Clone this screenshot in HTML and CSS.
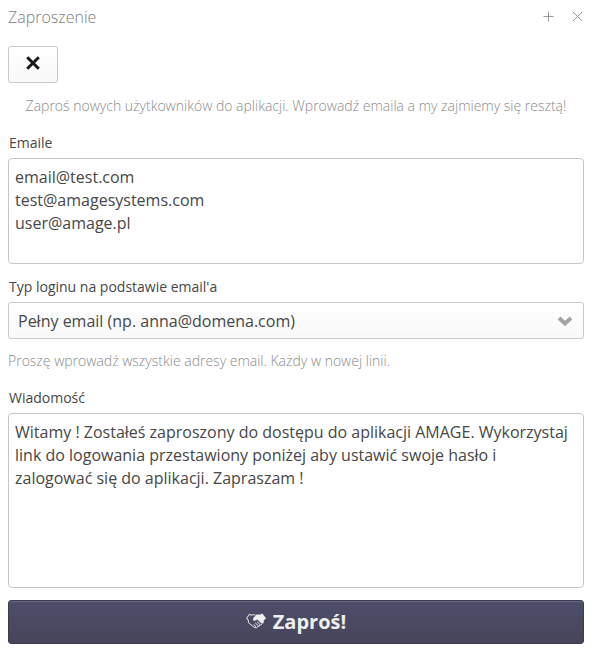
FILE: index.html
```html
<!DOCTYPE html>
<html lang="pl">
<head>
    <meta charset="UTF-8">
    <meta name="viewport" content="width=device-width, initial-scale=1.0">
    <title>Zaproszenie</title>
    <link rel="stylesheet" href="styles.css">
</head>
<body>
    <!-- Window header -->
    <header class="window-header">
        <h1 class="window-title">Zaproszenie</h1>
        <div class="window-controls">
            <button class="window-control" type="button" aria-label="Maksymalizuj">
                <svg width="11" height="11" viewBox="0 0 11 11"><path d="M5.5 0.5v10M0.5 5.5h10"/></svg>
            </button>
            <button class="window-control" type="button" aria-label="Zamknij">
                <svg width="11" height="11" viewBox="0 0 11 11"><path d="M1 1l9 9M10 1l-9 9"/></svg>
            </button>
        </div>
    </header>

    <form class="invite-form">
        <div class="toolbar">
            <button class="button" type="button" aria-label="Anuluj">
                <svg width="16" height="16" viewBox="0 0 16 16"><path d="M2.2 2.2l11.6 11.6M13.8 2.2L2.2 13.8"/></svg>
            </button>
        </div>

        <p class="note note-center">Zaproś nowych użytkowników do aplikacji. Wprowadź emaila a my zajmiemy się resztą!</p>

        <div class="field">
            <label class="field-label" for="emails">Emaile</label>
            <textarea class="text-area" id="emails" rows="4">email@test.com
test@amagesystems.com
user@amage.pl</textarea>
        </div>

        <div class="field">
            <label class="field-label" for="loginType">Typ loginu na podstawie email'a</label>
            <div class="select-wrap">
                <select class="select" id="loginType">
                    <option>Pełny email (np. anna@domena.com)</option>
                </select>
                <svg class="select-arrow" width="16" height="10" viewBox="0 0 16 10"><path d="M2 2l6 5.5L14 2"/></svg>
            </div>
        </div>

        <p class="note">Proszę wprowadź wszystkie adresy email. Każdy w nowej linii.</p>

        <div class="field">
            <label class="field-label" for="message">Wiadomość</label>
            <textarea class="text-area" id="message" rows="7">Witamy ! Zostałeś zaproszony do dostępu do aplikacji AMAGE. Wykorzystaj link do logowania przestawiony poniżej aby ustawić swoje hasło i zalogować się do aplikacji. Zapraszam !</textarea>
        </div>

        <button class="button-primary" type="submit">
            <svg width="20" height="16" viewBox="0 0 20 16">
                <path class="hand-solid" d="M7.6 4.4L10.6 1.6h3.9l1.8-1.1L20 5.2l-2.2 2.2-.2 2.8-1.9.4-4.5-4.1-2.2 1.2c-1.5.6-2.6-1.2-1.4-3.3z"/>
                <path class="hand-line" d="M9.5 2.2L7.6 1.7 5 2.2 3.7 1 .6 5.2l1.8 2.3v2.2l5.8 4.6 2.2.4 5.6-3.8M.8 5.4l1.5 1.8M11 8.6l3.2 3M9.2 9.8l3.2 3M7.6 11.4l2.4 2.2"/>
            </svg>
            <span>Zaproś!</span>
        </button>
    </form>
</body>
</html>
```
FILE: styles.css
```css
* {
    box-sizing: border-box;
}

body {
    margin: 0;
    padding: 0 6px 12px 8px;
    background: #fff;
    color: #474747;
    font-family: "Open Sans", sans-serif;
    font-size: 16px;
    line-height: 23px;
}

.window-header {
    display: flex;
    justify-content: space-between;
    align-items: center;
    height: 34px;
    padding-right: 1px;
}

.window-title {
    margin: 0;
    font-size: 16px;
    font-weight: 300;
    color: #7d7d7d;
}

.window-controls {
    display: flex;
    gap: 18px;
    padding-bottom: 2px;
}

.window-control {
    display: flex;
    padding: 0;
    border: none;
    background: none;
    cursor: pointer;
}

.window-control svg {
    fill: none;
    stroke: #999;
    stroke-width: 1;
}

.invite-form {
    display: flex;
    flex-direction: column;
    padding-top: 12px;
}

.toolbar {
    display: flex;
    margin-bottom: 12px;
}

.button {
    display: flex;
    justify-content: center;
    align-items: center;
    width: 50px;
    height: 37px;
    padding: 0 0 3px;
    border: 1px solid #c9c9c9;
    border-radius: 3px;
    background: linear-gradient(#fff, #f8f8f8);
    cursor: pointer;
}

.button svg {
    fill: none;
    stroke: #191919;
    stroke-width: 3;
}

.note {
    margin: 0 0 15px;
    font-size: 14px;
    font-weight: 300;
    line-height: 21px;
    color: #8c8c8c;
}

.note-center {
    text-align: center;
}

.field {
    display: flex;
    flex-direction: column;
    gap: 4px;
    margin-bottom: 11px;
}

.field:last-of-type {
    margin-bottom: 12px;
}

.field-label {
    padding-left: 1px;
    font-size: 14px;
}

.text-area {
    display: block;
    width: 100%;
    padding: 7px 6px 5px;
    border: 1px solid #c5c5c5;
    border-radius: 4px;
    background: #fff;
    color: #474747;
    font: inherit;
    resize: none;
}

.select-wrap {
    position: relative;
}

.select {
    display: block;
    width: 100%;
    height: 37px;
    padding: 2px 36px 0 9px;
    border: 1px solid #c9c9c9;
    border-radius: 3px;
    background: linear-gradient(#fff, #f8f8f8);
    color: #474747;
    font: inherit;
    appearance: none;
}

.select-arrow {
    position: absolute;
    top: 14px;
    right: 11px;
    fill: none;
    stroke: #a3a3a3;
    stroke-width: 4;
    pointer-events: none;
}

.button-primary {
    display: flex;
    justify-content: center;
    align-items: center;
    gap: 7px;
    height: 44px;
    padding: 0 0 2px;
    border: 1px solid #3b3a52;
    border-radius: 3px;
    background: linear-gradient(#4f4e6b, #464559);
    box-shadow: inset 0 1px 0 #6a6b7c;
    color: #efefef;
    font: inherit;
    font-size: 20px;
    font-weight: 700;
    cursor: pointer;
}

.hand-solid {
    fill: #efefef;
}

.hand-line {
    fill: none;
    stroke: #efefef;
    stroke-width: 1;
}
```
